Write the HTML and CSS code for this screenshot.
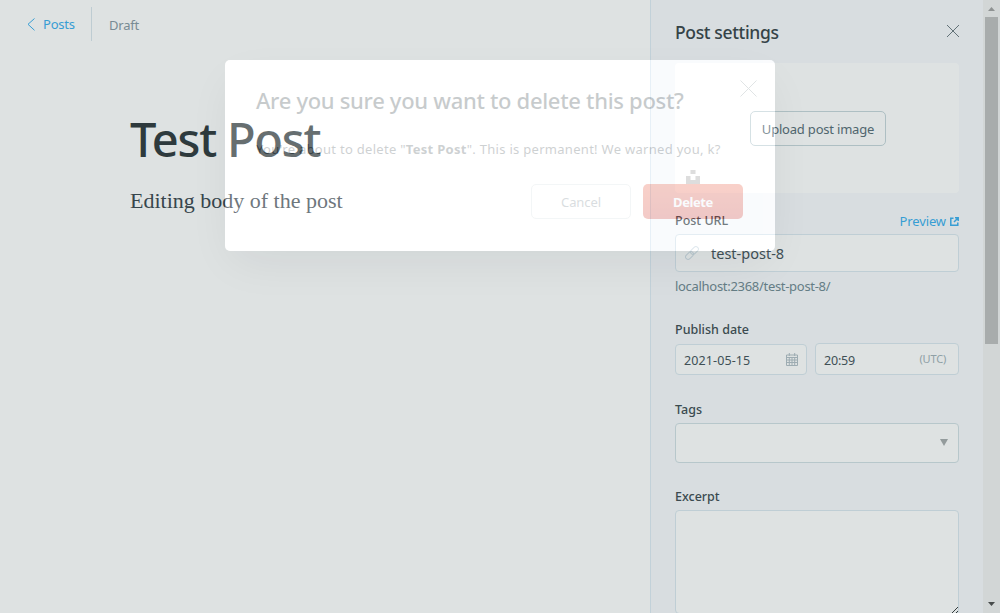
FILE: index.html
```html
<!DOCTYPE html>
<html lang="en">
<head>
<meta charset="utf-8">
<title>Test Post</title>
<link rel="stylesheet" href="styles.css">
</head>
<body>
<div class="app">
  <main class="editor">
    <header class="topbar">
      <a class="back"><svg width="8" height="13" viewBox="0 0 8 13"><path d="M7.5 .5 1 6.3l6.5 6"/></svg><span>Posts</span></a>
      <span class="status">Draft</span>
    </header>
    <article class="post">
      <h1 class="post-title"><span>Test Post</span></h1>
      <p class="post-body">Editing body of the post</p>
    </article>
  </main>
  <aside class="panel">
    <div class="panel-head">
      <h2 class="panel-title">Post settings</h2>
      <svg class="close" width="14" height="14" viewBox="0 0 14 14"><path d="m1 1 12 12M13 1 1 13"/></svg>
    </div>
    <div class="upload">
      <button class="upload-button">Upload post image</button>
      <svg class="unsplash" width="14" height="14" viewBox="0 0 14 14"><path d="M4.5 0h5v4h-5zM0 6h4.5v4h5V6H14v8H0z"/></svg>
    </div>
    <div class="label-row"><span class="label url-label">Post URL</span><a class="preview"><span>Preview</span><svg width="9" height="9" viewBox="0 0 9 9"><path d="M3.5 1.2H.8v7h7V5.5M5 .8h3.2V4M8 1 4 5"/></svg></a></div>
    <div class="input url"><svg width="14" height="14" viewBox="0 0 14 14"><g transform="rotate(-45 7 7)"><rect x="-1" y="4.5" width="9" height="5" rx="2.5"/><rect x="6" y="4.5" width="9" height="5" rx="2.5"/></g></svg><span>test-post-8</span></div>
    <div class="hint">localhost:2368/test-post-8/</div>
    <div class="label date-label">Publish date</div>
    <div class="date-row">
      <div class="input date"><span>2021-05-15</span><svg width="12" height="13" viewBox="0 0 12 13"><path d="M.5 2h11v10.5H.5zM.5 4.5h11M.5 7h11M.5 9.5h11M3.3 4.5v8M6 4.5v8M8.7 4.5v8M3.3 0v3M8.7 0v3"/></svg></div>
      <div class="input time"><span>20:59</span><small>(UTC)</small></div>
    </div>
    <div class="label tags-label">Tags</div>
    <div class="input tags"><svg width="8" height="7" viewBox="0 0 8 7"><path d="M0 0h8L4 7z"/></svg></div>
    <div class="label excerpt-label">Excerpt</div>
    <div class="input excerpt"><svg width="6" height="6" viewBox="0 0 6 6"><path d="M0 6 6 0M4 6l2-2"/></svg></div>
  </aside>
  <div class="scrollbar">
    <svg width="7" height="4" viewBox="0 0 7 4"><path class="arrow-up" d="M0 4 3.5 0 7 4z"/></svg>
    <div class="thumb"></div>
    <svg width="7" height="4" viewBox="0 0 7 4"><path class="arrow-down" d="M0 0h7L3.5 4z"/></svg>
  </div>
</div>
<div class="backdrop"></div>
<section class="modal">
  <svg class="modal-close" width="17" height="17" viewBox="0 0 17 17"><path d="m.5.5 16 16M16.5.5l-16 16"/></svg>
  <h2 class="modal-title">Are you sure you want to delete this post?</h2>
  <p class="modal-text">You're about to delete "<b>Test Post</b>". This is permanent! We warned you, k?</p>
  <div class="actions"><button class="cancel">Cancel</button><button class="delete">Delete</button></div>
</section>
</body>
</html>
```
FILE: styles.css
```css
* { box-sizing: border-box; margin: 0; }
body { width: 1000px; height: 613px; overflow: hidden; background: #fff; font-family: "Noto Sans", "Open Sans", sans-serif; white-space: nowrap; position: relative; }
svg { display: block; flex: none; fill: none; }
button { font: inherit; padding: 0; }
.app { display: flex; height: 613px; }
.editor { width: 650px; }
.topbar { display: flex; align-items: center; padding: 7px 0 0 27px; height: 41px; }
.back { display: flex; align-items: center; gap: 8px; height: 34px; width: 65px; border-right: 1px solid #dae6ed; color: #3eb0ef; font-size: 13px; letter-spacing: -.2px; }
.back svg { stroke: #3eb0ef; }
.back span { padding-bottom: 1px; }
.status { margin-left: 17px; padding-top: 2px; color: #8a9ba5; font-size: 13px; letter-spacing: -.2px; }
.post { padding: 65px 0 0 130px; }
.post-title { height: 66px; line-height: 66px; font-size: 47px; font-weight: 500; letter-spacing: -1.25px; color: #333d40; }
.post-body { margin-top: 15px; height: 28px; line-height: 28px; font-family: "Liberation Serif", serif; font-size: 22px; letter-spacing: 0; color: #3d4a52; }
.panel { width: 333px; height: 613px; overflow: hidden; padding: 0 24px; border-left: 1px solid #dfecf5; background: #f8fafd; }
.panel-head { display: flex; align-items: center; justify-content: space-between; height: 63px; }
.panel-title { font-size: 17.5px; font-weight: 500; letter-spacing: -.35px; color: #3c474c; }
.close { stroke: #707d84; margin: 0 -1px 2px 0; }
.upload { position: relative; display: flex; align-items: center; justify-content: center; height: 130px; padding-left: 2px; border-radius: 4px; background: #fff; }
.upload-button { width: 136px; height: 35px; padding-top: 1px; border: 1px solid #c8d7dc; border-radius: 5px; background: #fff; color: #5b7079; font-size: 13px; letter-spacing: -.2px; }
.unsplash { position: absolute; left: 11px; bottom: 9px; fill: #d2d2d2; }
.label { height: 20px; line-height: 20px; font-size: 12.5px; font-weight: 500; color: #434f55; }
.url-label { padding-top: 1px; }
.label-row { display: flex; justify-content: space-between; margin-top: 17px; height: 24px; }
.preview { display: flex; align-items: center; gap: 4px; height: 22px; color: #3eb0ef; font-size: 13px; letter-spacing: -.1px; }
.preview svg { stroke: #3eb0ef; stroke-width: 1.5; }
.input { display: flex; align-items: center; border: 1px solid #dbe8f0; border-radius: 4px; background: #fff; color: #48565d; }
.url { height: 38px; padding-left: 9px; gap: 12px; font-size: 14.5px; }
.url svg { stroke: #d5e1e9; overflow: visible; }
.hint { height: 28px; line-height: 28px; font-size: 13px; letter-spacing: -.3px; color: #738a94; }
.date-label { margin-top: 20px; }
.date-row { display: flex; align-items: flex-end; gap: 8px; height: 35px; }
.date { width: 132px; height: 31px; padding: 1px 8px 0; justify-content: space-between; font-size: 12.5px; letter-spacing: .1px; }
.date svg { stroke: #b4c1c8; margin-bottom: 2px; }
.time { width: 144px; height: 32px; padding: 2px 12px 0 8px; justify-content: space-between; font-size: 12.5px; letter-spacing: -.2px; }
.time small { font-size: 11px; color: #a4b3ba; padding-bottom: 3px; }
.tags-label { margin-top: 25px; }
.tags { margin-top: 3px; height: 40px; padding: 0 10px 2px 0; justify-content: flex-end; border-color: #d2e0e5; }
.tags svg { fill: #a8adae; }
.excerpt-label { margin-top: 24px; }
.excerpt { margin-top: 3px; height: 104px; align-items: flex-end; justify-content: flex-end; }
.excerpt svg { stroke: #3c4042; }
.scrollbar { display: flex; flex-direction: column; align-items: center; width: 17px; padding: 7px 0 7px; background: #f1f1f1; }
.thumb { width: 13px; height: 327px; margin: 6px 0 auto; background: #c1c1c1; }
.arrow-up { fill: #a3a3a3; }
.arrow-down { fill: #505050; }
/* The dimming lies around the dialog and leaves its own area clear. */
.backdrop { position: absolute; left: 225px; top: 60px; width: 550px; height: 191px; border-radius: 5px; box-shadow: 0 16px 44px -8px rgba(20,35,38,.07), 0 0 0 1000px rgba(14,44,47,.137); }
.modal { position: absolute; left: 225px; top: 60px; width: 550px; height: 191px; padding: 24px 32px 0 31px; border-radius: 5px; background: #fff; opacity: .25; color: #26343a; }
.modal-close { position: absolute; right: 18px; top: 20px; stroke: #87959b; }
.modal-title { height: 33px; line-height: 33px; font-size: 22px; font-weight: 500; letter-spacing: -.31px; }
.modal-text { margin-top: 20px; height: 24px; line-height: 24px; font-size: 13px; letter-spacing: .29px; color: #3e4a50; }
.actions { display: flex; justify-content: flex-end; gap: 12px; margin-top: 23px; }
.cancel, .delete { width: 100px; height: 35px; padding-top: 1px; border-radius: 5px; font-size: 13px; letter-spacing: -.1px; }
.cancel { border: 1px solid #d3dce0; background: #fff; color: #6b7c85; }
.delete { border: 0; background: linear-gradient(#e84a2c, #d23226); color: #fff; font-weight: 700; letter-spacing: -.4px; }
```
